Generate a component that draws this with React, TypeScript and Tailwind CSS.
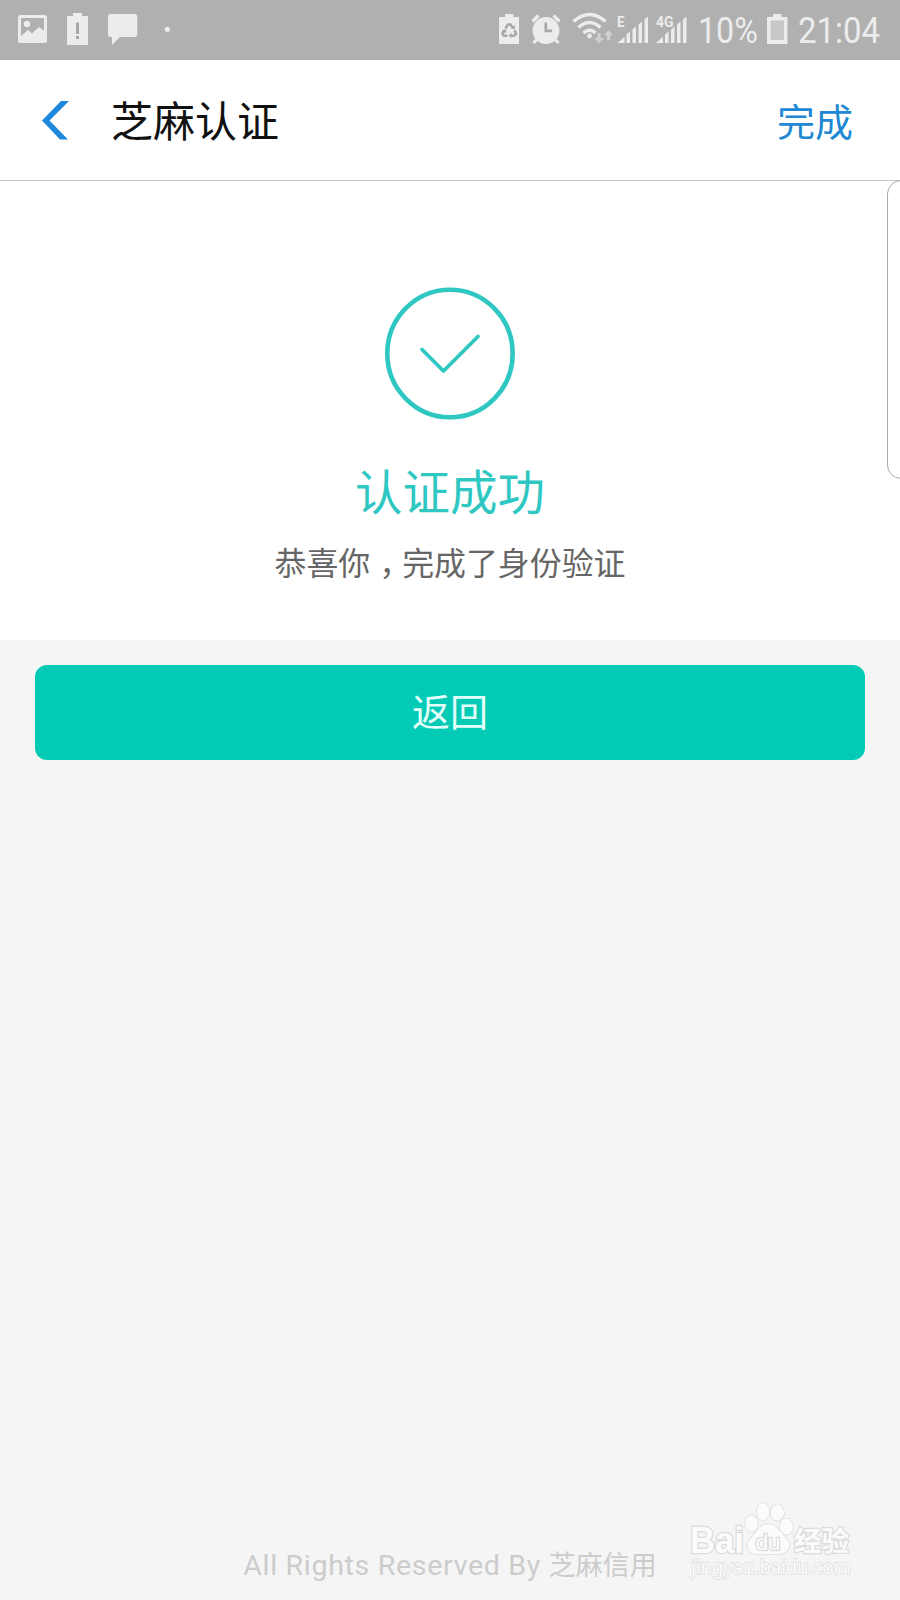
import React from 'react';

const cjk = "font-['Noto_Sans_CJK_SC',sans-serif]";

function SignalBars() {
  return (
    <g fill="#ececec">
      <path d="M0 26 L7 20 V26 Z" />
      <path d="M9 17.500 L12.500 14.500 V26 H9 Z" />
      <path d="M15 12.500 L18.500 9.500 V26 H15 Z" />
      <path d="M21 7.500 L24.500 4.500 V26 H21 Z" />
      <path d="M27 2.500 L30.500 -0.500 V26 H27 Z" />
    </g>
  );
}

function NotificationIcons() {
  return (
    <svg width="200" height="60" viewBox="0 0 200 60" fill="#ececec">
      {/* Picture */}
      <path
        fillRule="evenodd"
        d="M20.500 15 H44.500 Q47 15 47 17.500 V40.500 Q47 43 44.500 43 H20.500 Q18 43 18 40.500 V17.500 Q18 15 20.500 15 Z M21 18 V36 L28 30 L32 33.500 L39 27 L44 31 V18 Z"
      />
      <circle cx="27" cy="24" r="3.200" />
      {/* Low battery */}
      <path d="M73 13 H82 V16 H88 V45 H67 V16 H73 Z" />
      <path d="M76 22.500 H79 V34 H76 Z M76 36 H79 V39 H76 Z" fill="#a8a8a8" />
      {/* Chat */}
      <path d="M110 14 H135 Q137.300 14 137.300 16.500 V34.500 Q137.300 37 135 37 H120 L112 45 V37 H110 Q108 37 108 34.500 V16.500 Q108 14 110 14 Z" />
      <circle cx="167.300" cy="29.300" r="2.600" />
    </svg>
  );
}

function SystemIcons() {
  return (
    <svg width="200" height="60" viewBox="490 0 200 60" fill="#ececec">
      {/* Battery saver */}
      <path d="M505 14 H513.500 V17 H519 V44 H499 V17 H505 Z" />
      <g fill="none" stroke="#a8a8a8" strokeWidth="2.600">
        <path d="M505.500 28.500 L508 24.500 H510.500 L513 28" />
        <path d="M514.500 30 L516 34 L514 35.800 H510.500" />
        <path d="M507.500 35.800 H504 L502.500 33.500 L504.500 30.500" />
      </g>
      <path d="M511 29 L515.200 28.800 L514.500 25 Z M511.500 32.800 V38.300 L508.500 35.500 Z M501.500 30.500 L506 29 L506.500 33 Z" fill="#a8a8a8" />
      {/* Alarm */}
      <circle cx="546" cy="30.500" r="13.400" />
      <path d="M532.500 21.500 L538.500 15.500 M559.500 21.500 L553.500 15.500" stroke="#ececec" strokeWidth="3.400" />
      <path d="M538 38 L533.500 43 M554 38 L558.500 43" stroke="#ececec" strokeWidth="3.200" />
      <path d="M545.800 22.500 V30.800 H552" fill="none" stroke="#a8a8a8" strokeWidth="2.800" />
      {/* Wifi */}
      <g fill="none" stroke="#ececec" strokeWidth="3.400">
        <path d="M573.500 21.500 Q589.500 7.500 605.500 21.500" />
        <path d="M578.500 27.500 Q589.500 17.500 600.500 27.500" />
        <path d="M583.500 33 Q589.500 27.500 595.500 33" />
      </g>
      <circle cx="589.500" cy="36" r="2.400" />
      <g fill="#d0d0d0">
        <path d="M597.500 33 H600.500 V38 H604 L599 43.500 L594.500 38 H597.500 Z" />
        <path d="M607 40 H610 V35.500 H613 L608.500 30 L604 35.500 H607 Z" />
      </g>
      <g transform="translate(617.500 17)">
        <SignalBars />
      </g>
      <g transform="translate(656 17)">
        <SignalBars />
      </g>
      <text x="617" y="27.300" fontSize="14.500" fontWeight="700" fontFamily="Roboto" textLength="7.500" lengthAdjust="spacingAndGlyphs">E</text>
      <text x="656" y="27.300" fontSize="14.500" fontWeight="700" fontFamily="Roboto" textLength="17.500" lengthAdjust="spacingAndGlyphs">4G</text>
    </svg>
  );
}

function StatusBar() {
  return (
    <div className="flex h-[60px] justify-between bg-[#b0b0b0] font-['Roboto',sans-serif] text-[37px] leading-[62px] text-[#ececec]">
      <NotificationIcons />
      <div className="flex">
        <SystemIcons />
        <div className="w-[77px] pl-[8px]">
          <span className="inline-block origin-left scale-x-[0.87]">10%</span>
        </div>
        <svg width="30" height="60" viewBox="767 0 30 60">
          <path d="M773 14 H781.500 V17 H787.500 V44 H767 V17 H773 Z" fill="#ececec" />
          <rect x="770.500" y="20.500" width="13.500" height="19.500" fill="#c8c8c8" />
        </svg>
        <div className="w-[103px] pl-px">
          <span className="inline-block origin-left scale-x-[0.89]">21:04</span>
        </div>
      </div>
    </div>
  );
}

function Header() {
  return (
    <header className="flex h-[121px] items-center border-b border-[#c6c6c6] bg-white pl-[41px] pr-[47px]">
      <svg width="28" height="40" viewBox="0 0 28 40" fill="#1e88dc">
        <path d="M20 1 H28 L8.500 20.500 L27 39.500 H19 L1 20.500 Z" />
      </svg>
      <h1 className="ml-[42px] flex-1 pb-[3px] text-[42px] leading-[60px] text-[#111111]">芝麻认证</h1>
      <button className="pb-px text-[38px] leading-[60px] text-[#2189d3]">完成</button>
    </header>
  );
}

function ResultCard() {
  return (
    <section className="flex h-[459px] flex-col items-center bg-white pt-[106px]">
      <svg width="130" height="133" viewBox="0 0 130 133" fill="none" stroke="#2fc7c1">
        <ellipse cx="65" cy="66.500" rx="62.700" ry="63.700" strokeWidth="4.600" />
        <path d="M37 62.500 L58.500 84 L93 49.500" strokeWidth="3.800" strokeLinecap="round" strokeLinejoin="round" />
      </svg>
      <h2 className="mt-[35px] text-[47.500px] leading-[70px] text-[#2fc7c1]">认证成功</h2>
      <p className="mt-[12px] text-[31.900px] leading-[48px] text-[#666666]">
        恭喜你
        <span className="inline-block pl-[9px] pr-[7px] [font-feature-settings:'halt']">，</span>
        完成了身份验证
      </p>
    </section>
  );
}

function Watermark() {
  return (
    <svg
      className="absolute bottom-[18px] right-[40px]"
      width="180"
      height="82"
      viewBox="680 1500 180 82"
      fill="#fbfbfb"
      stroke="#dcdcdc"
      strokeWidth="1.500"
      paintOrder="stroke"
    >
      <text x="690" y="1553" fontSize="37" fontWeight="700" fontFamily="Liberation Sans" textLength="54" lengthAdjust="spacingAndGlyphs" strokeWidth="2.500">Bai</text>
      <ellipse cx="751.500" cy="1523.500" rx="6.300" ry="8.200" />
      <ellipse cx="763" cy="1511.500" rx="6.300" ry="8.700" />
      <ellipse cx="777.300" cy="1512.500" rx="6.700" ry="8.200" />
      <ellipse cx="786.300" cy="1526.500" rx="6.700" ry="8" />
      <path d="M768 1524 C776 1524 780 1532 786 1538 C793 1546 788 1554 779 1554 C772 1554 764 1554 757 1554 C748 1554 744 1546 751 1538 C757 1532 760 1524 768 1524 Z" />
      <text x="755.500" y="1549.500" fontSize="22" fontWeight="400" fontFamily="Liberation Sans" textLength="25" lengthAdjust="spacingAndGlyphs" strokeWidth="2.500">du</text>
      <text x="794" y="1550.500" fontSize="27.500" fontWeight="700" fontFamily="Noto Sans CJK SC" strokeWidth="2.500">经验</text>
      <text x="691" y="1574" fontSize="19.500" fontFamily="Noto Sans" textLength="160" lengthAdjust="spacingAndGlyphs">jingyan.baidu.com</text>
    </svg>
  );
}

export default function App() {
  return (
    <div className={`relative flex h-[1600px] w-[900px] flex-col overflow-hidden bg-[#f5f5f5] ${cjk}`}>
      <StatusBar />
      <Header />
      <ResultCard />
      <main className="flex flex-1 flex-col px-[35px] pt-[25px]">
        <button className="h-[95px] w-full rounded-xl bg-[#04cbb6] pb-[6px] text-[38px] leading-[88px] text-[#e3fffa]">
          返回
        </button>
        <footer className="mb-[12px] mt-auto text-center font-['Roboto','Noto_Sans_CJK_SC',sans-serif] text-[28.500px] leading-[44px] tracking-[0.7px] text-[#cccccc]">
          All Rights Reserved By <span className="text-[27px] tracking-normal">芝麻信用</span>
        </footer>
      </main>

      {/* Edge panel handle */}
      <div className="absolute -right-4 top-[180px] h-[299px] w-[29px] rounded-[14px] border border-[#aaaaaa] bg-white" />
      <Watermark />
    </div>
  );
}
